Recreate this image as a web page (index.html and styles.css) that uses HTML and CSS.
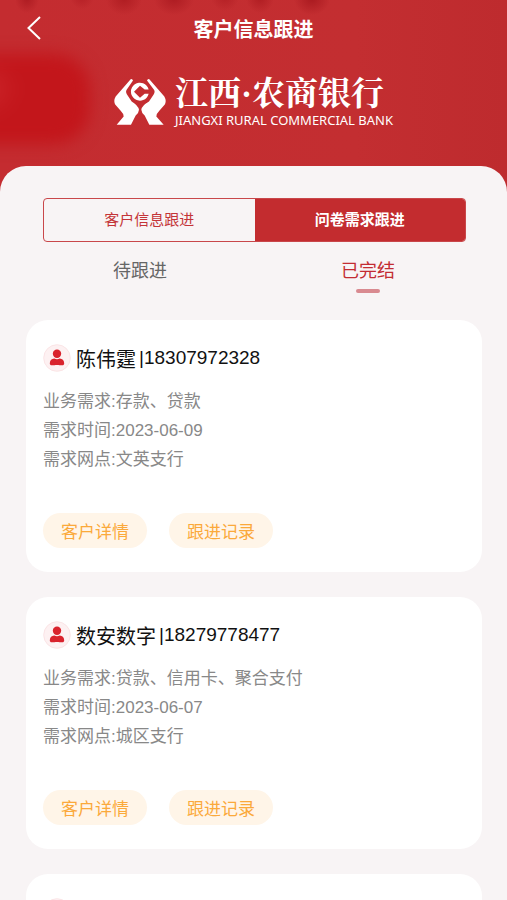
FILE: index.html
```html
<!DOCTYPE html>
<html lang="zh-CN">
<head>
<meta charset="utf-8">
<meta name="viewport" content="width=device-width, initial-scale=1">
<title>客户信息跟进</title>
<link rel="stylesheet" href="styles.css">
</head>
<body>
<svg class="sprite" aria-hidden="true">
  <symbol id="avatar" viewBox="0 0 28 28">
    <circle cx="14" cy="14" r="13.3" fill="#fdf1f2" stroke="#f9dfe1" stroke-width="0.8"/>
    <circle cx="14" cy="9.800" r="4.200" fill="#d9232d"/>
    <path d="M6.800 19.300C6.800 16.300 8.800 14.800 11.200 14.600C13 15.300 15 15.300 16.800 14.600C19.200 14.800 21.200 16.300 21.200 19.300C21.200 20.800 20.300 21.400 19 21.300C17.300 21.200 16 20.900 14 20.900C12 20.900 10.700 21.200 9 21.300C7.700 21.400 6.800 20.800 6.800 19.300Z" fill="#d9232d"/>
  </symbol>
</svg>
<header class="hero">
  <div class="navbar">
    <button class="back" type="button" aria-label="返回">
      <svg viewBox="0 0 16 26" width="16" height="26"><path d="M14 2L2.500 13L14 24" fill="none" stroke="#fff" stroke-width="2"/></svg>
    </button>
    <h1 class="title">客户信息跟进</h1>
  </div>
  <div class="brand">
    <svg class="emblem" viewBox="0 0 156 141" fill="#fff" aria-hidden="true">
      <path d="M50 2Q55 0 57 6L38 34Q34 40 39 48L53 69Q72 80 75 94Q75 102 65 111L51 139H8L29 114Q29 106 20 97L3 77Q-2 66 5 54Z"/>
      <path d="M106 2Q101 0 99 6L120 34Q124 40 119 48L105 69Q84 80 82 94Q82 102 92 111L106 139H149L127 114Q127 106 136 97L153 77Q158 66 151 54Z"/>
      <path fill-rule="evenodd" d="M104 33A27 27 0 1 0 104 46L92 46L78 58L60 40L78 22L92 33Z"/>
    </svg>
    <div class="wordmark">
      <span class="brand-cn">江西·农商银行</span>
      <span class="brand-en">JIANGXI RURAL COMMERCIAL BANK</span>
    </div>
  </div>
</header>
<main class="sheet">
  <div class="segment">
    <button type="button">客户信息跟进</button>
    <button type="button" class="on">问卷需求跟进</button>
  </div>
  <nav class="tabs">
    <a href="#pending">待跟进</a>
    <a href="#done" class="current">已完结</a>
  </nav>
  <div class="cards">
    <article class="card">
      <h2 class="customer"><svg class="avatar"><use href="#avatar"/></svg><span class="name">陈伟霆</span><span class="phone">|18307972328</span></h2>
      <div class="details">
        <p>业务需求:存款、贷款</p>
        <p>需求时间:2023-06-09</p>
        <p>需求网点:文英支行</p>
      </div>
      <div class="actions">
        <button type="button">客户详情</button>
        <button type="button">跟进记录</button>
      </div>
    </article>
    <article class="card">
      <h2 class="customer"><svg class="avatar"><use href="#avatar"/></svg><span class="name">数安数字</span><span class="phone">|18279778477</span></h2>
      <div class="details">
        <p>业务需求:贷款、信用卡、聚合支付</p>
        <p>需求时间:2023-06-07</p>
        <p>需求网点:城区支行</p>
      </div>
      <div class="actions">
        <button type="button">客户详情</button>
        <button type="button">跟进记录</button>
      </div>
    </article>
    <article class="card">
      <div class="customer"><svg class="avatar"><use href="#avatar"/></svg></div>
    </article>
  </div>
</main>
</body>
</html>
```
FILE: styles.css
```css
* {
  box-sizing: border-box;
}

body {
  margin: 0;
  height: 100vh;
  overflow: hidden;
  background: #f8f4f5;
  font-family: "Liberation Sans", "Noto Sans CJK SC", sans-serif;
}

h1, h2, p {
  margin: 0;
  font-weight: 400;
}

button {
  margin: 0;
  padding: 0;
  border: 0;
  background: none;
  font-family: inherit;
}

.sprite {
  display: none;
}

.hero {
  position: relative;
  overflow: hidden;
  padding-bottom: 64px;
  background: linear-gradient(90deg, #c42c30, #c32e31 70%, #be2b2e);
  color: #fff;
}

/* Soft decorative glow behind the header */
.hero::before {
  content: "";
  position: absolute;
  top: 54px;
  left: -40px;
  width: 130px;
  height: 90px;
  border-radius: 0 36px 36px 0;
  background: radial-gradient(circle at 30px 35px, #cc2429, #c3161b 30px);
  filter: blur(8px);
}

.hero::after {
  content: "";
  position: absolute;
  top: -5px;
  left: 0;
  width: 340px;
  height: 20px;
  background: radial-gradient(ellipse 12px 14px at 27px 4px, #ae1c22, transparent),
    radial-gradient(ellipse 12px 12px at 82px 2px, #b62026, transparent),
    radial-gradient(ellipse 18px 16px at 124px 4px, #b01d22, transparent),
    radial-gradient(ellipse 20px 16px at 174px 4px, #ae1c22, transparent),
    radial-gradient(ellipse 14px 14px at 225px 2px, #b42025, transparent),
    radial-gradient(ellipse 14px 15px at 260px 3px, #b01d22, transparent),
    radial-gradient(ellipse 18px 16px at 312px 4px, #aa1a20, transparent);
}

.navbar {
  position: relative;
  z-index: 1;
  display: grid;
  grid-template-columns: 48px 1fr 48px;
  align-items: center;
  height: 60px;
}

.back {
  display: flex;
  justify-content: flex-end;
  padding: 0 6px 4px 0;
}

.title {
  font-size: 20px;
  font-weight: 700;
  line-height: 28px;
  text-align: center;
}

.brand {
  position: relative;
  z-index: 1;
  display: flex;
  justify-content: center;
  align-items: center;
  gap: 9px;
  padding-top: 16px;
}

.emblem {
  width: 52px;
  height: 48px;
}

.wordmark {
  display: flex;
  flex-direction: column;
}

.brand-cn {
  font-family: "Liberation Serif", "Noto Serif CJK SC", "Noto Sans CJK SC", serif;
  font-size: 33px;
  font-weight: 700;
  line-height: 36px;
}

.brand-en {
  font-family: "Noto Sans", sans-serif;
  font-size: 13px;
  line-height: 16px;
}

.sheet {
  position: relative;
  z-index: 1;
  margin-top: -26px;
  padding: 32px 25px 0 26px;
  border-radius: 26px 26px 0 0;
  background: #f8f4f5;
}

.segment {
  display: grid;
  grid-template-columns: 1fr 1fr;
  margin: 0 16px 0 17px;
  overflow: hidden;
  border: 1px solid #c9474a;
  border-radius: 4px;
}

.segment button {
  height: 42px;
  padding-bottom: 3px;
  color: #c43438;
  font-size: 15px;
}

.segment .on {
  background: #c32c2f;
  color: #fff;
  font-weight: 700;
}

.tabs {
  display: grid;
  grid-template-columns: 1fr 1fr;
}

.tabs a {
  display: flex;
  flex-direction: column;
  align-items: center;
  gap: 4px;
  padding-top: 15px;
  color: #666;
  font-size: 18px;
  line-height: 28px;
  text-decoration: none;
}

.tabs .current {
  color: #c32c32;
}

.tabs .current::after {
  content: "";
  width: 24px;
  height: 4px;
  border-radius: 2px;
  background: #d98a90;
}

.cards {
  display: grid;
  gap: 25px;
  margin-top: 27px;
}

.card {
  padding: 24px 17px;
  border-radius: 22px;
  background: #fff;
}

.customer {
  display: flex;
  align-items: center;
  height: 28px;
  color: #111;
  font-size: 19px;
  line-height: 28px;
}

.avatar {
  width: 28px;
  height: 28px;
  margin-right: 5px;
}

.name {
  padding-top: 3px;
  font-size: 20px;
}

.phone {
  margin-left: 3px;
}

.details {
  margin-top: 15px;
  color: #888;
  font-size: 17px;
  line-height: 29px;
}

.actions {
  display: flex;
  gap: 22px;
  margin-top: 39px;
}

.actions button {
  width: 104px;
  height: 35px;
  border-radius: 18px;
  background: #fff5e8;
  color: #fba93b;
  font-size: 17px;
}
```
